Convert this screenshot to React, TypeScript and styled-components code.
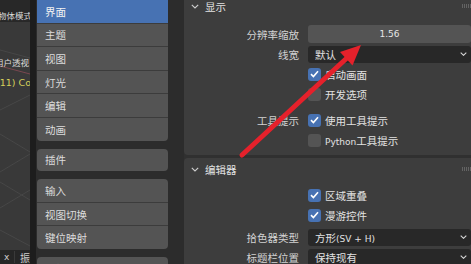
import React from 'react'
import styled, { createGlobalStyle } from 'styled-components'

const GlobalStyle = createGlobalStyle`
  html, body { margin: 0; padding: 0; background: #2b2b2b; }
  body { font-family: "DejaVu Sans", "Noto Sans CJK SC", sans-serif; }
`

const navGroups = [
  ['界面', '主题', '视图', '灯光', '编辑', '动画'],
  ['插件'],
  ['输入', '视图切换', '键位映射'],
  ['系统'],
]

const Screen = styled.div`
  position: relative;
  display: flex;
  width: 471px;
  height: 264px;
  overflow: hidden;
  background: #2b2b2b;
  color: #e0e0e0;
  font-size: 10.5px;
`

// latin runs are drawn smaller than the CJK glyphs, as Blender does
const Latin = styled.span`
  font-size: 9px;
`

/* 3D viewport on the left, mostly cut off */
const Viewport = styled.div`
  flex: none;
  width: 30px;
  display: flex;
  flex-direction: column;
  background: #393939;
  overflow: hidden;
`
const ViewHeader = styled.div`
  flex: none;
  height: 22px;
  box-sizing: border-box;
  display: flex;
  align-items: center;
  justify-content: flex-end;
  padding-top: 7px;
  margin-right: -2px;
  background: #282828;
  font-size: 8.5px;
  color: #dcdcdc;
  white-space: nowrap;
  overflow: hidden;
`
const ViewBody = styled.div`
  position: relative;
  flex: 1;
  display: flex;
  flex-direction: column;
  padding-top: 35px;
  font-size: 8.5px;
  white-space: nowrap;
  overflow: hidden;
`
const GridLines = styled.svg`
  position: absolute;
  left: 0;
  top: 0;
`
const OverlayText = styled.div<{ $yellow?: boolean }>`
  position: relative;
  height: 20px;
  margin-left: ${(p) => (p.$yellow ? -4 : -5)}px;
  line-height: 12px;
  overflow: hidden;
  font-size: ${(p) => (p.$yellow ? 9.5 : 8.5)}px;
  color: ${(p) => (p.$yellow ? '#d4cf5a' : '#dedede')};
`
const ViewFooter = styled.div`
  flex: none;
  height: 14px;
  display: flex;
  align-items: center;
  gap: 5px;
  padding-left: 4px;
  background: #262626;
  color: #cfcfcf;
  font-size: 10px;
  white-space: nowrap;
  overflow: hidden;
`
const FooterSep = styled.div`
  width: 1px;
  height: 12px;
  background: #3a3a3a;
`

const AreaGap = styled.div`
  flex: none;
  width: 6px;
  background: #1d1d1d;
`

/* preferences navigation */
const Nav = styled.div`
  flex: none;
  width: 131px;
  display: flex;
  flex-direction: column;
  gap: 8px;
  padding: 0 16px 0 1px;
  background: #2c2c2c;
`
const NavGroup = styled.div`
  flex: none;
  display: flex;
  flex-direction: column;
  border-radius: 4px;
  overflow: hidden;
  &:first-child {
    border-top-left-radius: 0;
    border-top-right-radius: 0;
  }
`
const NavItem = styled.div<{ $active?: boolean }>`
  flex: none;
  height: 22.6px;
  display: flex;
  align-items: center;
  padding-left: 8px;
  background: ${(p) => (p.$active ? '#4772b3' : '#545454')};
  color: ${(p) => (p.$active ? '#f2f2f2' : '#dddddd')};
  & + & {
    border-top: 1px solid #3c3c3c;
  }
`

/* main settings area */
const Content = styled.div`
  flex: 1;
  display: flex;
  flex-direction: column;
  gap: 3px;
  margin-top: -5px;
  background: #303030;
  overflow: hidden;
`
const Panel = styled.div`
  flex: none;
  display: flex;
  flex-direction: column;
  margin-right: -6px;
  padding-bottom: 5px;
  border-radius: 4px;
  background: #3d3d3d;
`
const PanelHeader = styled.div`
  height: 22px;
  display: flex;
  align-items: center;
  gap: 6px;
  padding: 0 6px 0 7px;
  color: #e2e2e2;
`
const Grip = styled.svg`
  margin-left: auto;
`
const PanelBody = styled.div<{ $top: number }>`
  display: flex;
  flex-direction: column;
  padding-top: ${(p) => p.$top}px;
`
const Row = styled.div<{ $space?: number }>`
  display: grid;
  grid-template-columns: 115px 163px;
  column-gap: 9px;
  align-items: center;
  height: 20px;
  margin-top: ${(p) => p.$space ?? 0}px;
`
const Label = styled.div`
  text-align: right;
  color: #d2d2d2;
  white-space: nowrap;
`
const NumField = styled.div`
  height: 18px;
  display: flex;
  align-items: center;
  justify-content: center;
  border-radius: 3px;
  background: #545454;
  color: #e6e6e6;
`
const Dropdown = styled.div`
  height: 17px;
  display: flex;
  align-items: center;
  justify-content: space-between;
  padding: 0 4px 0 7px;
  border-radius: 3px;
  background: #282828;
  color: #e2e2e2;
  white-space: nowrap;
`
const CheckItem = styled.div`
  display: flex;
  align-items: center;
  gap: 4px;
  color: #e2e2e2;
  white-space: nowrap;
`
const Box = styled.div<{ $on?: boolean }>`
  flex: none;
  width: 13px;
  height: 13px;
  display: flex;
  align-items: center;
  justify-content: center;
  border-radius: 3px;
  background: ${(p) => (p.$on ? '#4772b3' : '#545454')};
`
const Arrow = styled.svg`
  position: absolute;
  left: 0;
  top: 0;
  pointer-events: none;
`

const Chevron = () => (
  <svg width="8" height="5" viewBox="0 0 8 5">
    <path d="M0.8 0.8 L4 4 L7.2 0.8" fill="none" stroke="#cfcfcf" strokeWidth="1.1" />
  </svg>
)

const SmallChevron = () => (
  <svg width="7" height="4" viewBox="0 0 7 4">
    <path d="M0.7 0.6 L3.5 3.3 L6.3 0.6" fill="none" stroke="#d8d8d8" strokeWidth="1.1" />
  </svg>
)

const GripDots = () => (
  <Grip width="9" height="4" viewBox="0 0 9 4">
    {[0, 2, 4, 6, 8].map((x) =>
      [0, 2].map((y) => <rect key={`${x}-${y}`} x={x} y={y + 0.5} width="1" height="1" fill="#8a8a8a" />),
    )}
  </Grip>
)

const Check: React.FC<{ on?: boolean; children: React.ReactNode }> = ({ on, children }) => (
  <CheckItem>
    <Box $on={on}>
      {on && (
        <svg width="9" height="8" viewBox="0 0 9 8">
          <path d="M1 4.2 L3.4 6.5 L8 1.2" fill="none" stroke="#ffffff" strokeWidth="1.6" />
        </svg>
      )}
    </Box>
    <span>{children}</span>
  </CheckItem>
)

export default function App() {
  return (
    <>
      <GlobalStyle />
      <Screen>
        <Viewport>
          <ViewHeader>物体模式</ViewHeader>
          <ViewBody>
            <GridLines width="30" height="228" viewBox="0 0 30 228">
              <g stroke="#474747" strokeWidth="1" fill="none">
                <line x1="0" y1="28" x2="30" y2="36" />
                <line x1="0" y1="88" x2="30" y2="73" />
                <line x1="0" y1="112" x2="30" y2="130" />
                <line x1="0" y1="150" x2="30" y2="132" />
                <line x1="0" y1="160" x2="30" y2="178" />
                <line x1="0" y1="186" x2="30" y2="168" />
                <line x1="0" y1="208" x2="30" y2="224" />
              </g>
              <line x1="0" y1="44" x2="30" y2="52" stroke="#7a4750" strokeWidth="1" />
            </GridLines>
            <OverlayText>用户透视</OverlayText>
            <OverlayText $yellow>(11) Co</OverlayText>
          </ViewBody>
          <ViewFooter>
            <Latin>x</Latin>
            <FooterSep />
            <span>振</span>
          </ViewFooter>
        </Viewport>
        <AreaGap />
        <Nav>
          {navGroups.map((group, gi) => (
            <NavGroup key={gi}>
              {group.map((name) => (
                <NavItem key={name} $active={name === '界面'}>
                  {name}
                </NavItem>
              ))}
            </NavGroup>
          ))}
        </Nav>
        <Content>
          <Panel>
            <PanelHeader>
              <Chevron />
              显示
              <GripDots />
            </PanelHeader>
            <PanelBody $top={7}>
              <Row>
                <Label>分辨率缩放</Label>
                <NumField>
                  <Latin>1.56</Latin>
                </NumField>
              </Row>
              <Row>
                <Label>线宽</Label>
                <Dropdown>
                  默认
                  <SmallChevron />
                </Dropdown>
              </Row>
              <Row>
                <Label />
                <Check on>启动画面</Check>
              </Row>
              <Row>
                <Label />
                <Check>开发选项</Check>
              </Row>
              <Row $space={6}>
                <Label>工具提示</Label>
                <Check on>使用工具提示</Check>
              </Row>
              <Row>
                <Label />
                <Check>
                  <Latin>Python</Latin>工具提示
                </Check>
              </Row>
            </PanelBody>
          </Panel>
          <Panel>
            <PanelHeader>
              <Chevron />
              编辑器
              <GripDots />
            </PanelHeader>
            <PanelBody $top={5}>
              <Row>
                <Label />
                <Check on>区域重叠</Check>
              </Row>
              <Row>
                <Label />
                <Check on>漫游控件</Check>
              </Row>
              <Row $space={2}>
                <Label>拾色器类型</Label>
                <Dropdown>
                  <span>
                    方形<Latin>(SV + H)</Latin>
                  </span>
                  <SmallChevron />
                </Dropdown>
              </Row>
              <Row>
                <Label>标题栏位置</Label>
                <Dropdown>
                  保持现有
                  <SmallChevron />
                </Dropdown>
              </Row>
            </PanelBody>
          </Panel>
        </Content>
        <Arrow width="471" height="264" viewBox="0 0 471 264">
          <line x1="242" y1="155" x2="348" y2="57" stroke="#e5212b" strokeWidth="5" strokeLinecap="round" />
          <polygon points="361,45 340,52 352.5,65.5" fill="#e5212b" />
        </Arrow>
      </Screen>
    </>
  )
}
